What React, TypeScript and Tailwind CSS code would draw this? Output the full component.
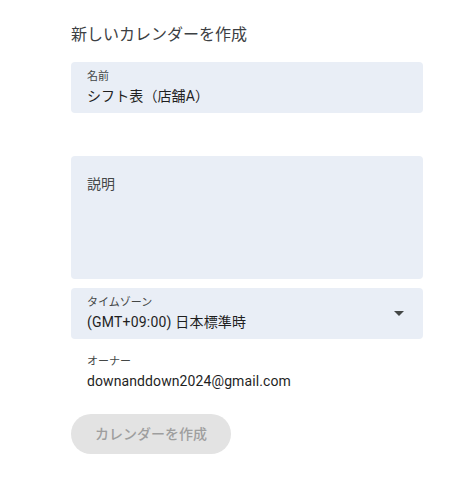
import React from 'react';

// ── Field shells ─────────────────────────────────────────────────────────────

function FilledField({ label, value }: { label: string; value: string }) {
  return (
    <div className="h-[51px] rounded-[4px] bg-[#e9eef6] px-4 pt-[7px]">
      <div className="text-[11px] leading-[16px] text-[#444746]">{label}</div>
      <div className="text-[14px] leading-[22px] text-[#1f1f1f] tracking-[0.1px]">{value}</div>
    </div>
  );
}

export default function App() {
  return (
    <div
      className="w-[467px] h-[487px] bg-white pl-[71px] pr-[44px] pt-[24px]"
      style={{ fontFamily: 'Roboto, "Noto Sans CJK JP", sans-serif' }}
    >
      <h1 className="text-[16px] leading-[22px] text-[#3c4043] font-normal">新しいカレンダーを作成</h1>

      <div className="mt-[16px]">
        <FilledField label="名前" value="シフト表（店舗A）" />
      </div>

      {/* Description */}
      <div className="mt-[43px] h-[123px] rounded-[4px] bg-[#e9eef6] px-4 pt-[17px]">
        <div className="text-[14px] leading-[22px] text-[#444746]">説明</div>
      </div>

      {/* Time zone */}
      <div className="mt-[9px] h-[51px] rounded-[4px] bg-[#e9eef6] pl-4 pr-[19px] pt-[7px] flex items-start justify-between">
        <div>
          <div className="text-[11px] leading-[16px] text-[#444746]">タイムゾーン</div>
          <div className="text-[14px] leading-[22px] text-[#1f1f1f] tracking-[0.2px]">(GMT+09:00) 日本標準時</div>
        </div>
        <svg className="mt-[16px]" width="10" height="5" viewBox="0 0 10 5">
          <path d="M0 0h10L5 5z" fill="#444746" />
        </svg>
      </div>

      {/* Owner */}
      <div className="mt-[15px] px-4">
        <div className="text-[11px] leading-[16px] text-[#444746]">オーナー</div>
        <div className="text-[14px] leading-[22px] text-[#1f1f1f] tracking-[0.1px]">downanddown2024@gmail.com</div>
      </div>

      <button
        disabled
        className="mt-[22px] h-[40px] w-[160px] rounded-full bg-[#e3e3e3] text-[14px] font-medium text-[#9e9e9e]"
      >
        カレンダーを作成
      </button>
    </div>
  );
}
